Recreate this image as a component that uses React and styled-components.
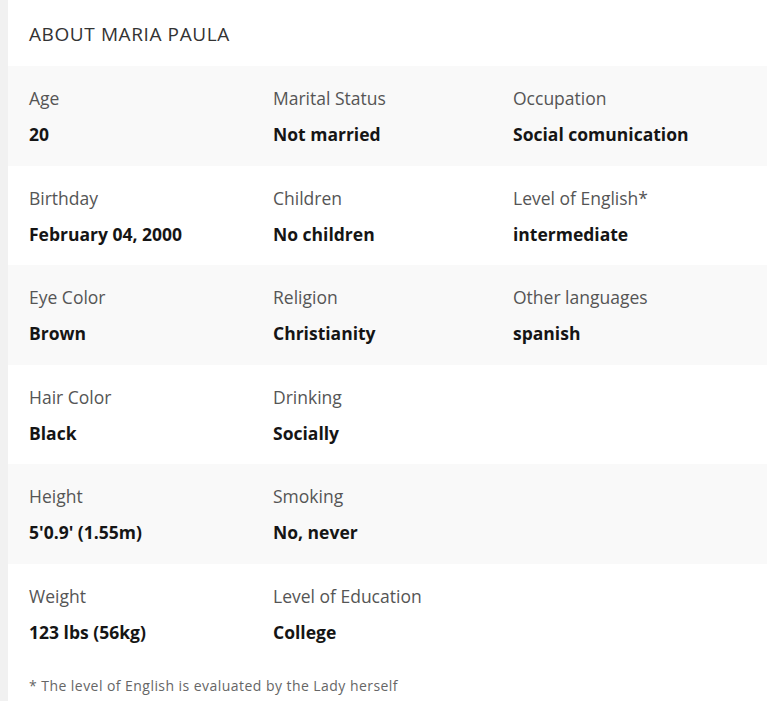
import React from "react";
import styled, { createGlobalStyle } from "styled-components";

const Global = createGlobalStyle`
  html, body { margin: 0; padding: 0; background: #f1f1f1; }
  body { font-family: "Open Sans", "Liberation Sans", sans-serif; }
  * { box-sizing: border-box; }
`;

const Page = styled.div`
  padding-left: 8px;
  min-height: 701px;
`;

const Card = styled.section`
  background: #ffffff;
  min-height: 701px;
  padding-right: 3px;
`;

const Heading = styled.h2`
  margin: 0;
  padding: 22px 0 20px 21px;
  font-size: 19px;
  line-height: 24px;
  font-weight: 500;
  letter-spacing: 0.6px;
  color: #333333;
  text-transform: uppercase;
`;

const Row = styled.div`
  display: grid;
  grid-template-columns: 244px 240px 1fr;
  padding: 22px 0 21.5px 21px;
  background: ${(p) => (p.$shaded ? "#f9f9f9" : "#ffffff")};
`;

const Cell = styled.div`
  display: flex;
  flex-direction: column;
  gap: 16px;
`;

const Label = styled.div`
  font-size: 17.5px;
  line-height: 20px;
  color: #555555;
  white-space: nowrap;
`;

const Value = styled.div`
  font-size: 17.5px;
  line-height: 20px;
  font-weight: 700;
  color: #151515;
  white-space: nowrap;
`;

const Note = styled.p`
  margin: 14px 0 0;
  padding-left: 21px;
  font-size: 14px;
  line-height: 18px;
  letter-spacing: 0.45px;
  color: #666666;
`;

const rows = [
  [["Age", "20"], ["Marital Status", "Not married"], ["Occupation", "Social comunication"]],
  [["Birthday", "February 04, 2000"], ["Children", "No children"], ["Level of English*", "intermediate"]],
  [["Eye Color", "Brown"], ["Religion", "Christianity"], ["Other languages", "spanish"]],
  [["Hair Color", "Black"], ["Drinking", "Socially"]],
  [["Height", "5'0.9' (1.55m)"], ["Smoking", "No, never"]],
  [["Weight", "123 lbs (56kg)"], ["Level of Education", "College"]],
];

export default function App() {
  return (
    <>
      <Global />
      <Page>
        <Card>
          <Heading>About Maria Paula</Heading>
          {rows.map((r, i) => (
            <Row key={i} $shaded={i % 2 === 0}>
              {r.map(([l, v]) => (
                <Cell key={l}>
                  <Label>{l}</Label>
                  <Value>{v}</Value>
                </Cell>
              ))}
            </Row>
          ))}
          <Note>* The level of English is evaluated by the Lady herself</Note>
        </Card>
      </Page>
    </>
  );
}
